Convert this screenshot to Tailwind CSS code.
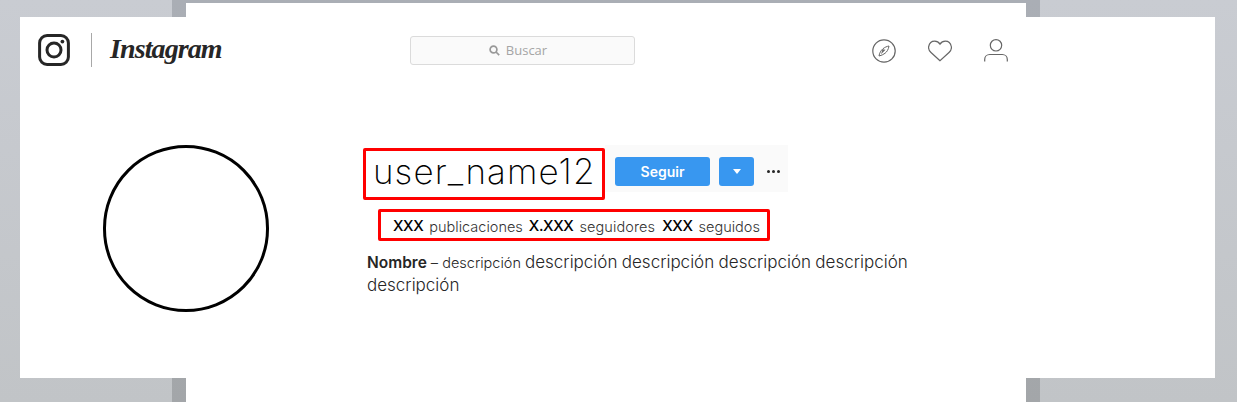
<!DOCTYPE html>
<html lang="es">
  <head>
    <meta charset="UTF-8" />
    <title>Instagram perfil</title>
    <script src="https://cdn.jsdelivr.net/npm/@tailwindcss/browser@4"></script>
  </head>
  <body class="w-[1237px] h-[402px] overflow-hidden relative bg-linear-to-b from-[#c9ccd2] to-[#c1c4c7] font-['Inter',sans-serif]">
    <!-- page behind the panel -->
    <div class="ml-[172px] w-[868px] h-[402px] bg-linear-to-b from-[#aaaeb5] to-[#a3a6a9] pt-[3px] px-[14px]">
      <div class="h-full bg-white"></div>
    </div>

    <!-- white panel -->
    <div class="absolute left-[20px] top-[17px] w-[1195px] h-[361px] bg-white">
      <!-- header -->
      <header class="flex items-center h-[66px] pl-[18px]">
        <svg class="w-[32px] h-[32px] mt-[-1px]" viewBox="0 0 32 32" fill="none" stroke="#262626">
          <rect x="1.6" y="1.6" width="28.8" height="28.8" rx="7.5" stroke-width="3" />
          <circle cx="16" cy="16" r="7" stroke-width="3" />
          <circle cx="24.4" cy="7.6" r="1.9" fill="#262626" stroke="none" />
        </svg>
        <div class="w-px h-[34px] bg-[#a8a8a8] ml-[21px]"></div>
        <div class="ml-[18px] w-[112px] text-[28px] leading-none italic font-semibold font-['Liberation_Serif',serif] text-[#262626] tracking-[-0.9px] mt-[-2px]">Instagram</div>
        <div class="ml-[188px] w-[225px] h-[29px] border border-[#dbdbdb] rounded-[3px] bg-[#fafafa] flex items-center justify-center gap-[6px] mt-[1px] pr-[9px]">
          <svg class="w-[11px] h-[11px]" viewBox="0 0 11 11" fill="none" stroke="#999" stroke-width="1.7">
            <circle cx="4.5" cy="4.5" r="3.4" />
            <path d="M7 7l3.2 3.2" />
          </svg>
          <span class="text-[13px] text-[#a5a5a5] font-['Open_Sans',sans-serif]">Buscar</span>
        </div>
        <div class="ml-[237px] flex items-center gap-[32px] mt-[1px]">
          <svg class="w-[24px] h-[24px]" viewBox="0 0 24 24" fill="none" stroke="#666">
            <circle cx="12" cy="12" r="11.2" stroke-width="1.2" />
            <path d="M17 7c-.6 3.500-2 5.800-4 7.300-1.700 1.300-3.700 2.200-6 2.700.5-3 1.800-5.500 4-7.300C12.800 8.300 14.800 7.400 17 7z" stroke-width="1" />
            <path d="M9 15.200l4.500-4.500-3-.5z" fill="#666" stroke="none" />
          </svg>
          <svg class="w-[24px] h-[22px]" viewBox="0 0 24 22" fill="none" stroke="#666" stroke-width="1.200">
            <path d="M12 20.800 3 12.500C.9 10.500.2 8.800.7 6.500 1.300 3.500 3.700 1.200 6.700 1.200c2.300 0 4 1 5.300 3 1.300-2 3-3 5.300-3 3 0 5.400 2.300 6 5.300.5 2.300-.2 4-2.300 6z" />
          </svg>
          <svg class="w-[24px] h-[23px]" viewBox="0 0 24 23" fill="none" stroke="#666" stroke-width="1.200">
            <circle cx="12" cy="6.300" r="5.700" />
            <path d="M.7 22.500v-2c0-3 2.300-5 5-5h12.600c2.700 0 5 2 5 5v2" />
          </svg>
        </div>
      </header>

      <!-- profile -->
      <main class="flex items-start pl-[83px] pt-[62px]">
        <div class="w-[166px] h-[167px] rounded-full border-[3.5px] border-black shrink-0"></div>
        <section class="ml-[94px] w-[560px]">
          <div class="flex items-start mt-[3px]">
            <div class="w-[242px] h-[52px] border-[3px] border-[#ff0000] rounded-[2px] flex items-center pl-[7px] pb-[6px] text-[35px] font-extralight text-black tracking-[1.1px] leading-none">user_name12</div>
            <div class="flex items-start h-[47px] w-[183px] bg-[#fafafa] pl-[10px] mt-[-3px] pt-[12px]">
              <button class="w-[95px] h-[29px] rounded-[3px] bg-[#3897f0] text-white text-[14px] font-semibold">Seguir</button>
              <button class="w-[35px] h-[29px] rounded-[3px] bg-[#3897f0] ml-[9px] flex items-center justify-center">
                <span class="w-0 h-0 border-x-[4.500px] border-x-transparent border-t-[5px] border-t-white"></span>
              </button>
              <div class="flex gap-[2px] ml-[13px] mt-[13px]">
                <span class="w-[3px] h-[3px] rounded-full bg-[#262626]"></span>
                <span class="w-[3px] h-[3px] rounded-full bg-[#262626]"></span>
                <span class="w-[3px] h-[3px] rounded-full bg-[#262626]"></span>
              </div>
            </div>
          </div>
          <div class="ml-[15px] mt-[9px] w-[392px] h-[32px] border-[3px] border-[#ff0000] rounded-[2px] flex items-center pl-[12px] pt-[3px] text-[14.5px] font-light text-[#333] whitespace-nowrap">
            <span class="font-medium text-black text-[15px] tracking-[-0.4px]">XXX</span>
            <span class="ml-[6px]">publicaciones</span>
            <span class="ml-[6px] font-medium text-black text-[15px] tracking-[-0.4px]">X.XXX</span>
            <span class="ml-[6px] tracking-[0.1px]">seguidores</span>
            <span class="ml-[7px] font-medium text-black text-[15px] tracking-[-0.4px]">XXX</span>
            <span class="ml-[6px]">seguidos</span>
          </div>
          <div class="ml-[4px] mt-[10px] text-[17px] leading-[22px] font-light text-[#262626] whitespace-nowrap">
            <div class="flex items-baseline">
              <span class="text-[15.5px] font-semibold">Nombre</span>
              <span class="ml-[4px] text-[14.5px]">– descripción</span>
              <span class="ml-[4px] [word-spacing:-0.4px]">descripción descripción descripción descripción</span>
            </div>
            <div>descripción</div>
          </div>
        </section>
      </main>
    </div>
  </body>
</html>
